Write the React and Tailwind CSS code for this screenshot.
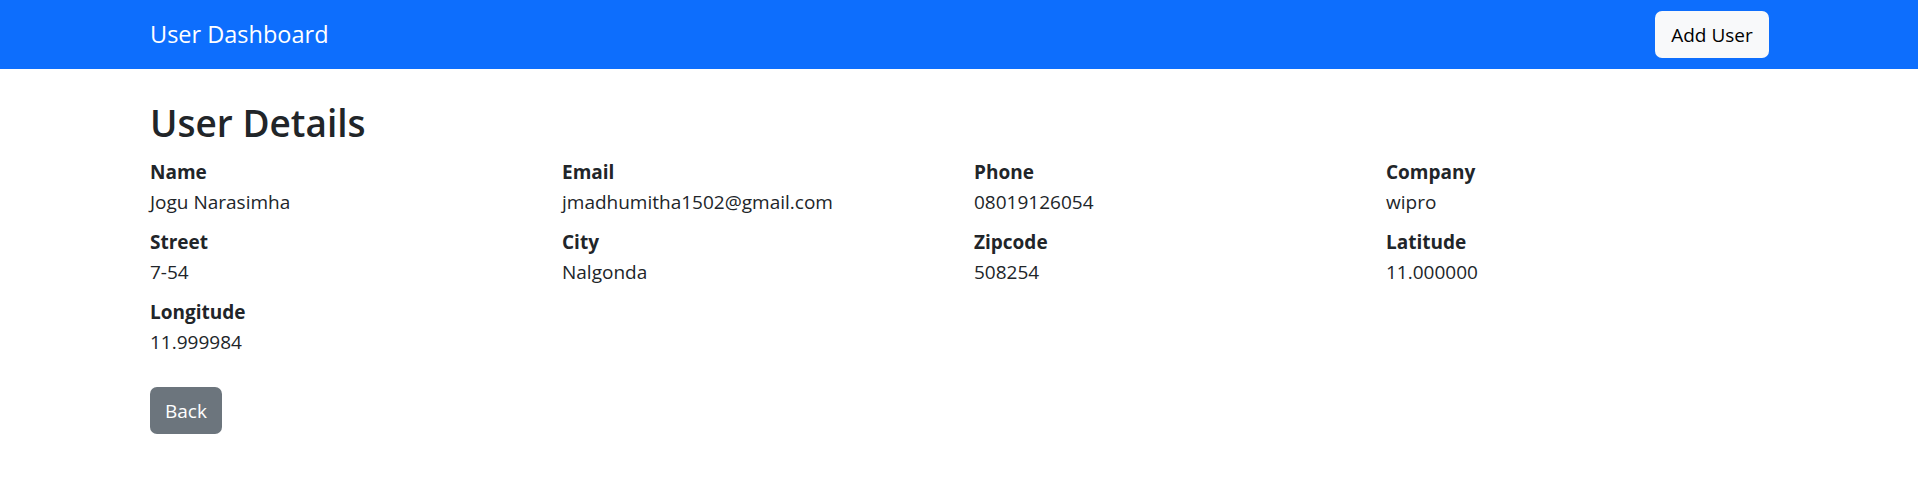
const fields = [
  ['Name', 'Jogu Narasimha'],
  ['Email', 'jmadhumitha1502@gmail.com'],
  ['Phone', '08019126054'],
  ['Company', 'wipro'],
  ['Street', '7-54'],
  ['City', 'Nalgonda'],
  ['Zipcode', '508254'],
  ['Latitude', '11.000000'],
  ['Longitude', '11.999984'],
]

export default function App() {
  return (
    <div className="min-h-[490px] bg-white text-[#212529] text-[19px] leading-[30px]" style={{ fontFamily: '"Segoe UI", "Open Sans", sans-serif' }}>
      <nav className="h-[69px] bg-[#0d6efd]">
        <div className="w-[1620px] mx-auto h-full flex items-center justify-between pl-[1px]">
          <span className="text-white text-[23.5px] leading-[37px]">User Dashboard</span>
          <button className="h-[47px] w-[114px] rounded-[7px] bg-[#f8f9fa] text-[#000] text-[19px]">Add User</button>
        </div>
      </nav>

      <div className="w-[1620px] mx-auto pl-[1px]">
        <h2 className="mt-[30px] mb-[10px] text-[37px] leading-[48px] font-semibold">User Details</h2>
        <div className="grid grid-cols-[412px_412px_412px_412px]">
          {fields.map(([label, value]) => (
            <div key={label} className="mb-[10px]">
              <div className="font-bold">{label}</div>
              <div>{value}</div>
            </div>
          ))}
        </div>
        <button className="mt-[20px] h-[47px] w-[72px] rounded-[7px] bg-[#6c757d] text-white text-[19px]">Back</button>
      </div>
    </div>
  )
}
